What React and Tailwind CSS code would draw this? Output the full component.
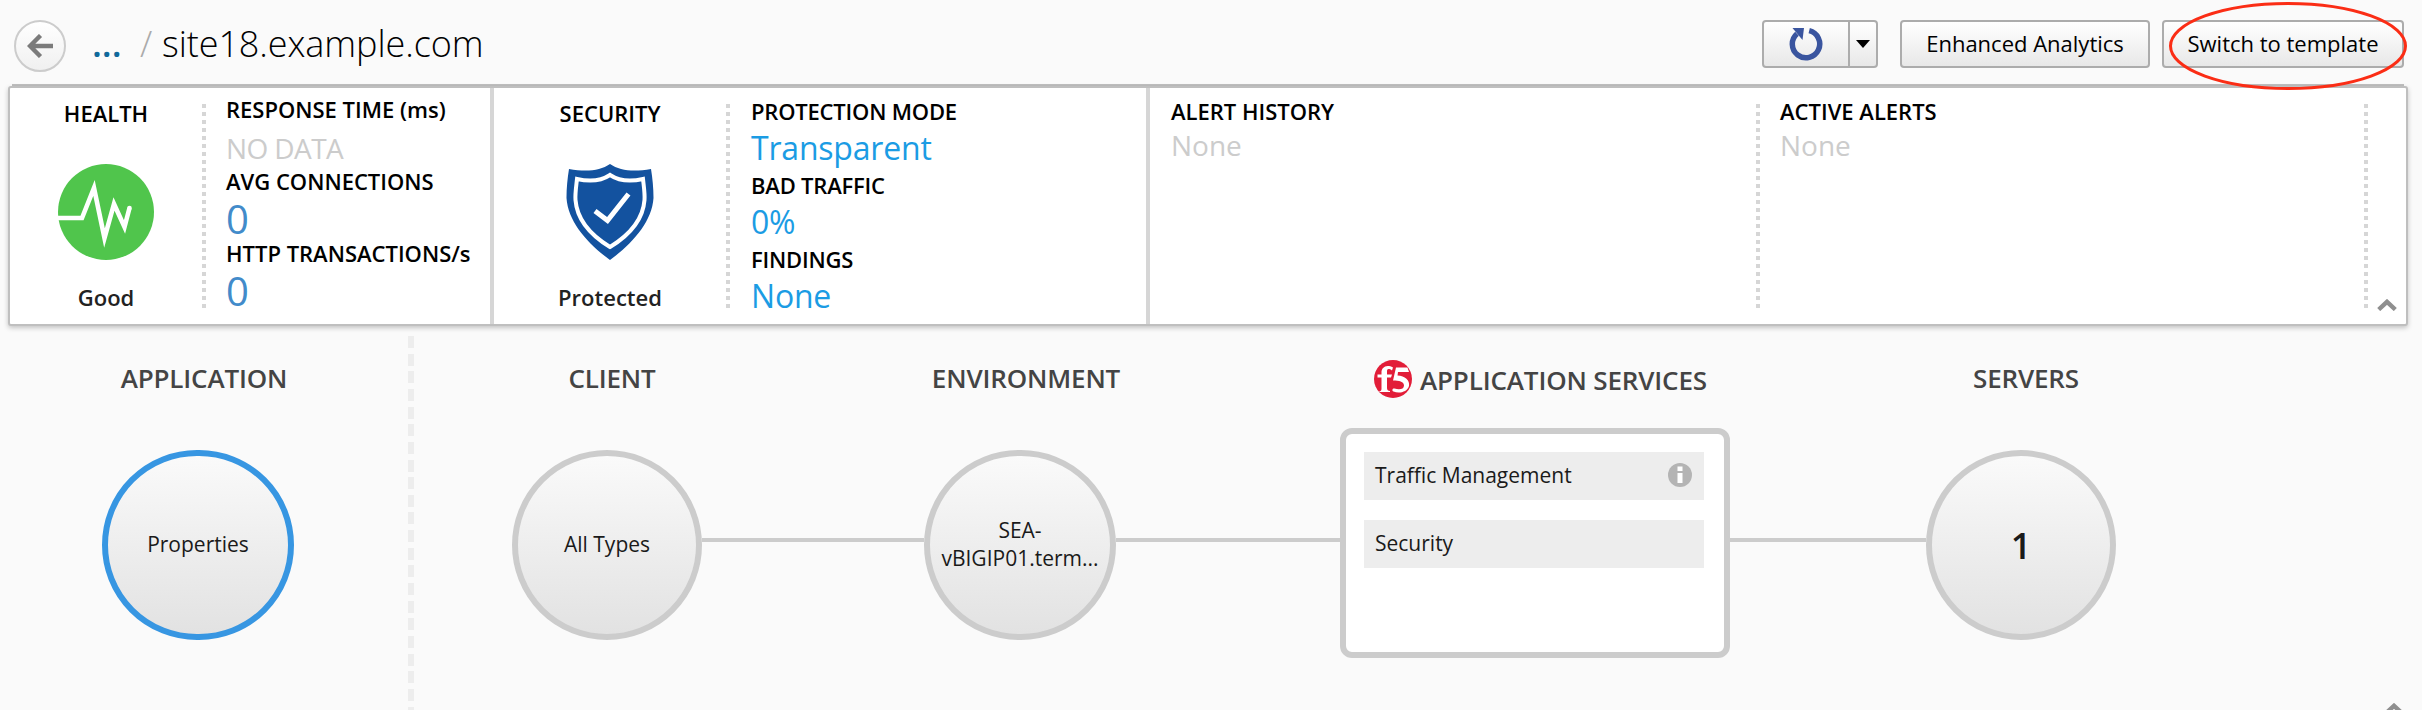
function Dots() {
  return <div className="mt-4 h-[204px] w-1 shrink-0 bg-[repeating-linear-gradient(to_bottom,#d6d6d6_0px,#d6d6d6_4px,transparent_4px,transparent_8px)]" />;
}

function Label({ children }) {
  return <div className="text-[22px] leading-[28px] font-semibold text-black">{children}</div>;
}

function Node({ children, className = "" }) {
  return (
    <div className={"flex h-[190px] shrink-0 items-center justify-center rounded-full border-[6px] bg-linear-to-b from-[#fafafa] to-[#e2e2e2] pb-[3px] text-center text-[21px] leading-[28px] text-[#1a1a1a] " + className}>
      {children}
    </div>
  );
}

function Line({ className }) {
  return <div className={"mb-[6px] h-1 shrink-0 bg-[#ccc] " + className} />;
}

function BackIcon() {
  return (
    <svg width="26" height="24" viewBox="0 0 26 24" fill="none" stroke="#7b7b7b" strokeWidth="4.4">
      <path d="M26 12H3M13.5 1.5L3 12l10.500 10.500" />
    </svg>
  );
}

function RefreshIcon() {
  return (
    <svg width="34" height="34" viewBox="0 0 34 34" fill="none">
      <path d="M20.200 3.700A13.700 13.700 0 1 1 8 6.700" stroke="#3a559f" strokeWidth="5.500" />
      <path d="M3.500 1H15L13.500 13z" fill="#3a559f" />
    </svg>
  );
}

function HealthIcon() {
  return (
    <svg width="96" height="96" viewBox="0 0 96 96">
      <circle cx="48" cy="48" r="48" fill="#50c54c" />
      <path d="M0 54H24L36 24L46.500 74L56 40L66.500 63L71.500 44" fill="none" stroke="#fff" strokeWidth="4.6" strokeMiterlimit="10" />
      <circle cx="71.500" cy="44" r="2.300" fill="#fff" />
    </svg>
  );
}

function ShieldIcon() {
  return (
    <svg width="88" height="96" viewBox="0 0 88 96">
      <path d="M44 0C34 7 20 8 3 5C1.500 14 0.500 24 0.500 34C2 58 22 80 44 96C66 80 86 58 87.500 34C87.500 24 86.500 14 85 5C68 8 54 7 44 0Z" fill="#13529f" />
      <path d="M44 11C35 17 24 18 11 15C10 24 9 30 9.500 36C11 56 26 72 44 83C62 72 77 56 78.500 36C79 30 78 24 77 15C64 18 53 17 44 11Z" fill="none" stroke="#fff" strokeWidth="4" />
      <path d="M29 47L41.500 56.500L62.500 30" fill="none" stroke="#fff" strokeWidth="5" />
    </svg>
  );
}

function Chevron() {
  return (
    <svg width="20" height="12" viewBox="0 0 20 12" fill="none" stroke="#8f8f8f" strokeWidth="4.400">
      <path d="M1.700 10.500L10 2.800L18.300 10.500" />
    </svg>
  );
}

function Logo() {
  return (
    <svg width="38" height="38" viewBox="0 0 38 38">
      <circle cx="19" cy="19" r="19" fill="#e21d38" />
      <path d="M19 7.500C12 3.500 7.500 8 7.500 12V14.500H3.500V17.500H7.500V29C7.500 31 6 31.500 4.500 32H16V31C14 31 13 30 13 28V17.500H17L18 14.500H13V11.500C13 8.500 15 8.500 18 10.500Z" fill="#fff" />
      <path d="M22 7.500H33.500L35 12H24L23.500 15.500C31 16 36 20 35 26C33.500 32 25 34 19.500 31.500C17.500 30.500 18.500 28 20.500 28.500C25 30 30 29.500 30 25.500C30 21.500 25 20.500 19 20.500Z" fill="#fff" />
    </svg>
  );
}

const button = "flex h-12 items-center justify-center rounded-[4px] border-2 border-[#acacac] bg-linear-to-b from-white to-[#e8e8e8] text-[22px] text-black";

export default function App() {
  return (
    <div className="h-[710px] w-[2422px] overflow-hidden bg-[#fafafa] font-['Open_Sans',sans-serif] whitespace-nowrap">
      <header className="flex h-[84px] items-start pt-5 pl-[14px]">
        <div className="flex size-[52px] items-center justify-center rounded-full border-2 border-[#ccc] bg-linear-to-b from-white to-[#f0f0f0]">
          <BackIcon />
        </div>
        <div className="ml-[26px] flex h-[48px] items-center text-[36px] leading-[48px]">
          <span className="w-[48px] font-semibold text-[#10699b]">...</span>
          <span className="w-[22px] font-light text-[#aaa]">/</span>
          <span className="font-light tracking-[-0.08px] text-black">site18.example.com</span>
        </div>
        <div className="mr-[18px] ml-auto flex">
          <div className={button + " w-[116px]"}>
            <div className="flex h-full w-[86px] items-center justify-center border-r-2 border-[#acacac]">
              <RefreshIcon />
            </div>
            <div className="flex flex-1 justify-center">
              <svg width="14" height="8" viewBox="0 0 14 8"><path d="M0 0H14L7 8z" /></svg>
            </div>
          </div>
          <button className={button + " ml-[22px] w-[250px] pb-[2px]"}>Enhanced Analytics</button>
          <button className={button + " relative ml-3 w-[242px] pb-[2px]"}>
            Switch to template
            <svg className="absolute -top-[23px] left-[3px] z-10" width="242" height="94" viewBox="0 0 242 94" fill="none">
              <ellipse cx="121" cy="47" rx="117.500" ry="42.500" stroke="#fb2d15" strokeWidth="3" />
            </svg>
          </button>
        </div>
      </header>

      <div className="mr-[18px] ml-3 h-[2px] bg-[#bfbfbf]" />
      <section className="mr-[14px] ml-2 flex h-[240px] rounded-[3px] border-2 border-[#bfbfbf] bg-white shadow-[0_2px_5px_rgba(0,0,0,0.22)]">
        <div className="flex w-[484px] border-r-4 border-[#d6d6d6]">
          <div className="flex w-48 flex-col items-center pt-[11px]">
            <Label>HEALTH</Label>
            <div className="mt-[37px]"><HealthIcon /></div>
            <div className="mt-[23px] text-[22px] leading-[28px] font-semibold text-[#222]">Good</div>
          </div>
          <Dots />
          <div className="pt-[7px] pl-5">
            <Label>RESPONSE TIME (ms)</Label>
            <div className="h-[44px] pt-[6px] text-[28px] leading-[38px] tracking-[-0.6px] text-[#ccc]">NO DATA</div>
            <Label>AVG CONNECTIONS</Label>
            <div className="h-[44px] text-[40px] leading-[47px] text-[#428bca]">0</div>
            <Label>HTTP TRANSACTIONS/s</Label>
            <div className="text-[40px] leading-[47px] text-[#428bca]">0</div>
          </div>
        </div>

        <div className="flex w-[656px] border-r-4 border-[#d6d6d6]">
          <div className="flex w-[232px] flex-col items-center pt-[11px]">
            <Label>SECURITY</Label>
            <div className="mt-[37px]"><ShieldIcon /></div>
            <div className="mt-[23px] text-[22px] leading-[28px] font-semibold text-[#222]">Protected</div>
          </div>
          <Dots />
          <div className="pt-[9px] pl-[21px] text-[32px] leading-[46px] tracking-[-0.2px] text-[#1b9ce4]">
            <Label>PROTECTION MODE</Label>
            <div>Transparent</div>
            <Label>BAD TRAFFIC</Label>
            <div>0%</div>
            <Label>FINDINGS</Label>
            <div>None</div>
          </div>
        </div>

        <div className="w-[606px] pt-[9px] pl-[21px]">
          <Label>ALERT HISTORY</Label>
          <div className="text-[28px] leading-[40px] text-[#ccc]">None</div>
        </div>
        <Dots />
        <div className="w-[604px] pt-[9px] pl-[20px]">
          <Label>ACTIVE ALERTS</Label>
          <div className="text-[28px] leading-[40px] text-[#ccc]">None</div>
        </div>
        <Dots />
        <div className="flex items-end pb-[13px] pl-[9px]"><Chevron /></div>
      </section>

      <main className="flex h-[384px] pt-[10px]">
        <div className="flex w-[408px] flex-col">
          <h2 className="mt-[25px] text-center text-[26px] leading-[34px] font-semibold tracking-[-0.15px] text-[#444]">APPLICATION</h2>
          <Node className="mt-[55px] ml-[102px] w-[192px] border-[#3796e2]">Properties</Node>
        </div>
        <div className="w-[6px] shrink-0 bg-[repeating-linear-gradient(to_bottom,#ededed_0px,#ededed_12px,transparent_12px,transparent_17.650px)]" />
        <div className="flex-1">
          <div className="mt-[24px] flex h-[38px] items-center text-[26px] leading-[34px] font-semibold tracking-[-0.15px] text-[#444]">
            <h2 className="ml-[98px] w-[200px] pb-[3px] text-center">CLIENT</h2>
            <h2 className="ml-[214px] w-[200px] pb-[3px] text-center">ENVIRONMENT</h2>
            <div className="ml-[248px] flex items-center gap-2">
              <Logo />
              <h2 className="w-[290px] pt-[1px]">APPLICATION SERVICES</h2>
            </div>
            <h2 className="ml-[216px] w-[200px] pb-[3px] text-center">SERVERS</h2>
          </div>
          <div className="mt-[30px] flex items-center pl-[98px]">
            <Node className="mt-[4px] w-[190px] border-[#ccc]">All Types</Node>
            <Line className="w-[222px]" />
            <Node className="mt-[4px] w-[192px] border-[#ccc]">
              <div>SEA-<br />vBIGIP01.term...</div>
            </Node>
            <Line className="w-[224px]" />
            <div className="flex h-[230px] w-[390px] shrink-0 flex-col gap-5 rounded-xl border-[6px] border-[#ccc] bg-white pt-[18px] pr-5 pl-[18px] text-[21px] text-[#1a1a1a]">
              <div className="flex h-12 items-center justify-between bg-[#ededed] pr-3 pb-[1px] pl-[11px]">
                <span>Traffic Management</span>
                <svg className="mb-[2px]" width="24" height="24" viewBox="0 0 24 24">
                  <circle cx="12" cy="12" r="12" fill="#b4b4b4" />
                  <path d="M9.500 3.500H14.500V8H9.500zM9.500 10H14.500V20H9.500z" fill="#fff" />
                </svg>
              </div>
              <div className="flex h-12 items-center bg-[#ededed] pb-[1px] pl-[11px]">Security</div>
            </div>
            <Line className="w-[196px]" />
            <Node className="mt-[4px] w-[190px] border-[#ccc]"><span className="pt-[5px] text-[36px] font-semibold">1</span></Node>
          </div>
          <div className="mt-[45px] flex justify-end pr-[18px]"><Chevron /></div>
        </div>
      </main>
    </div>
  );
}
